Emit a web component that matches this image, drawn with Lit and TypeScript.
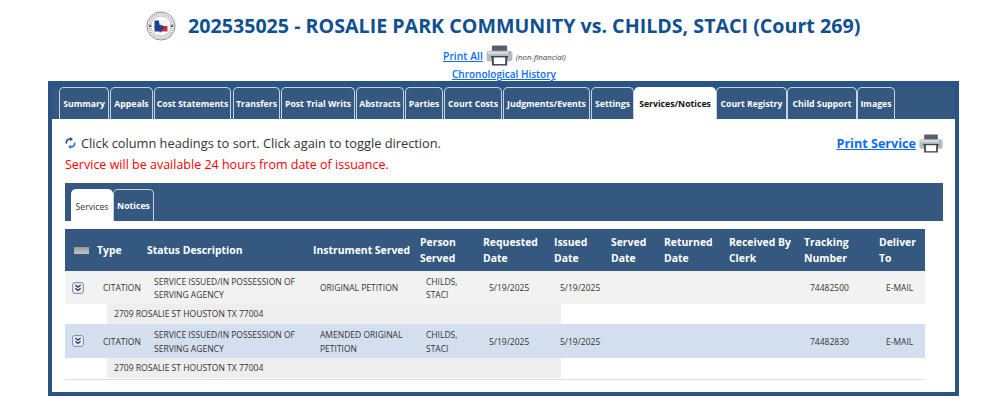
import { LitElement, html, css } from "lit";
import { customElement } from "lit/decorators.js";

const TABS: [string, number, number][] = [
  ["Summary", 50, 1], ["Appeals", 43, 1], ["Cost Statements", 77, 2], ["Transfers", 47, 1],
  ["Post Trial Writs", 74, 1], ["Abstracts", 48, 1], ["Parties", 38, 1], ["Court Costs", 58, 1],
  ["Judgments/Events", 87, 1], ["Settings", 43, 0], ["Services/Notices", 82, 0],
  ["Court Registry", 71, 0], ["Child Support", 70, 0], ["Images", 38, 0],
];

const COLS = [25, 50, 166, 107, 63, 71, 57, 53, 65, 75, 75, 53];
const HEAD: string[][] = [
  [], ["Type"], ["Status Description"], ["Instrument Served"], ["Person", "Served"],
  ["Requested", "Date"], ["Issued", "Date"], ["Served", "Date"], ["Returned", "Date"],
  ["Received By", "Clerk"], ["Tracking", "Number"], ["Deliver", "To"],
];
const ROWS = [
  { inst: ["ORIGINAL PETITION"], track: "74482500", alt: false },
  { inst: ["AMENDED ORIGINAL", "PETITION"], track: "74482830", alt: true },
];

const lines = (l: string[]) => l.map((t, i) => html`${i ? html`<br />` : ""}${t}`);

const printer = (w: number, h: number) => html`<svg class="ico" width=${w} height=${h} viewBox="0 0 28 22">
  <rect x="6" y="0.5" width="16" height="7" rx="1" fill="#5b5f66" />
  <rect x="0.5" y="6" width="27" height="11" rx="2" fill="#b4bac1" />
  <rect x="1.5" y="7" width="25" height="2.5" fill="#d9dde1" />
  <rect x="23" y="7.5" width="3" height="2" fill="#7fb4e0" />
  <rect x="5" y="11.5" width="18" height="2" fill="#4a4d52" />
  <rect x="6" y="12" width="16" height="9.5" fill="#3f4247" />
  <rect x="8" y="13" width="12" height="7" fill="#fff" />
</svg>`;

const seal = html`<svg class="seal" width="30" height="30" viewBox="0 0 30 30">
  <circle cx="15" cy="15" r="14" fill="#fff" stroke="#8a8a8a" stroke-width="1" />
  <circle cx="15" cy="15" r="11.8" fill="none" stroke="#777" stroke-width="2" stroke-dasharray="1 1.1" opacity=".7" />
  <circle cx="15" cy="15" r="10" fill="#fff" stroke="#999" stroke-width=".6" />
  <rect x="3.2" y="14.2" width="2" height="1.6" fill="#333" />
  <rect x="24.8" y="14.2" width="2" height="1.6" fill="#333" />
  <rect x="8.5" y="9.5" width="4.5" height="11" fill="#1d3f94" />
  <rect x="13" y="9.5" width="8.5" height="5.5" fill="#f4f4f4" />
  <rect x="13" y="15" width="8.5" height="5.5" fill="#d5312d" />
  <path d="M10 10 L13 10 L13.5 13.5 L17 14.5 L18.5 17 L15.5 20 L14 22 L12.5 18.5 L10.5 17.5 L8 15.5 L10 14.5 Z" fill="#1d3f94" opacity=".9" />
</svg>`;

const sortIcon = html`<svg class="ico" width="11" height="12" viewBox="0 0 11 12">
  <path d="M1.4 6.6 C0.8 3.6 2.8 1.8 5.6 2.1" fill="none" stroke="#1f4e8a" stroke-width="1.6" />
  <path d="M5 0 L8 2.2 L5 4.3 Z" fill="#1f4e8a" />
  <path d="M9.6 5.4 C10.2 8.4 8.2 10.2 5.4 9.9" fill="none" stroke="#3c78b8" stroke-width="1.6" />
  <path d="M6 12 L3 9.8 L6 7.7 Z" fill="#3c78b8" />
</svg>`;

const expandIcon = html`<svg class="ico" width="12" height="12" viewBox="0 0 12 12">
  <rect x=".6" y=".6" width="10.8" height="10.8" rx="2" fill="#e4ecf6" stroke="#7b8ba0" stroke-width="1" />
  <path d="M3.4 3 L6 5.2 L8.6 3 M3.4 6.2 L6 8.4 L8.6 6.2" fill="none" stroke="#2b3a4e" stroke-width="1.2" />
</svg>`;

@customElement("app-root")
export class AppRoot extends LitElement {
  static styles = css`
    :host { display: block; width: 999px; height: 418px; overflow: hidden; background: #fff; font-family: "Open Sans", "Noto Sans", sans-serif; color: #333; }
    a { color: #0a6cf5; text-decoration: underline; font-weight: 600; }
    .ico { display: block; flex: none; }
    .title { display: flex; align-items: center; height: 30px; margin: 11px 0 0 146px; }
    .seal { margin-right: 12px; flex: none; }
    h1 { margin: 0; font-size: 19.65px; font-weight: 700; color: #0f5091; white-space: nowrap; line-height: 26px; }
    .print-all { display: flex; align-items: center; height: 22px; margin: 3px 0 0 443px; font-size: 10.4px; }
    .print-all a { padding-top: 2px; }
    .print-all .ico { margin: 0 3px 0 3px; }
    .print-all i { font-size: 7.8px; color: #444; padding-top: 3px; }
    .chrono { height: 14px; line-height: 14px; margin: 1px 0 0 452px; font-size: 10px; }
    .box { width: 903px; height: 305px; margin: 0 0 0 48px; border: 4px solid #2a5486; border-top-width: 6px; background: #34587f; display: flex; flex-direction: column; }
    .tabs { display: flex; height: 32px; padding-left: 7px; flex: none; }
    .tab { box-sizing: border-box; flex: none; height: 32px; border: 1px solid #c5d2e0; border-bottom: 0; border-radius: 5px 5px 0 0; color: #fff; font-size: 8.7px; font-weight: 700; display: flex; align-items: center; justify-content: center; white-space: nowrap; padding-top: 1px; }
    .tab.on { background: #fff; color: #111; border-color: #fff; }
    .panel { flex: 1; background: #fff; padding: 13px 12px 0 13px; }
    .top { display: flex; justify-content: space-between; height: 22px; align-items: center; }
    .hint { display: flex; align-items: center; gap: 5px; font-size: 12.8px; color: #333; }
    .ps { display: flex; align-items: center; gap: 3px; font-size: 12.6px; font-weight: 700; }
    .red { color: #f00; font-size: 12.5px; height: 20px; line-height: 22px; }
    .subbar { height: 38px; margin-top: 9px; background: #34587f; display: flex; align-items: flex-end; padding-left: 6px; box-sizing: border-box; width: 878px; }
    .stab { box-sizing: border-box; height: 32px; font-size: 8.7px; display: flex; align-items: center; justify-content: center; border-radius: 5px 5px 0 0; }
    .stab.on { width: 42px; background: #fff; color: #333; font-weight: 400; padding-top: 3px; }
    .stab.off { width: 41px; color: #fff; font-weight: 700; border: 1px solid #c5d2e0; border-bottom: 0; padding-top: 1px; }
    table { border-collapse: collapse; table-layout: fixed; width: 860px; margin-top: 8px; }
    th { background: #34587f; color: #fff; font-size: 10.4px; font-weight: 700; text-align: left; padding: 0 0 0 7px; height: 42px; line-height: 16.5px; vertical-align: middle; }
    td { box-sizing: border-box; font-size: 8.5px; color: #333; padding: 1px 0 0 14px; line-height: 13.2px; height: 33px; vertical-align: middle; }
    td.n { padding-left: 13px; }
    tr.a td { background: #f2f2f2; }
    tr.b td { background: #d3dfef; height: 34px; }
    td.exp { padding: 0 0 0 7px; }
    th.ic { padding-left: 9px; }
    .cardicon { width: 15px; height: 7px; background: linear-gradient(#9a9a9a, #c4c4c4); }
    tr.addr td { padding: 0; height: 20px; }
    tr.addr.last td { border-bottom: 1px solid #dcdcdc; height: 21px; }
    .addrbox { box-sizing: border-box; width: 454px; margin-left: 42px; height: 20px; line-height: 21px; background: #eee; padding-left: 7px; font-size: 8.55px; }
  `;

  render() {
    return html`
      <div class="title">${seal}<h1>202535025 - ROSALIE PARK COMMUNITY vs. CHILDS, STACI (Court 269)</h1></div>
      <div class="print-all"><a href="#">Print All</a>${printer(27, 21)}<i>(non-financial)</i></div>
      <div class="chrono"><a href="#">Chronological History</a></div>
      <div class="box">
        <div class="tabs">
          ${TABS.map(([t, w, g]) => html`<div class="tab ${t === "Services/Notices" ? "on" : ""}" style="width:${w}px;margin-right:${g}px">${t}</div>`)}
        </div>
        <div class="panel">
          <div class="top">
            <div class="hint">${sortIcon}<span>Click column headings to sort. Click again to toggle direction.</span></div>
            <a class="ps" href="#"><span>Print Service</span>${printer(24, 19)}</a>
          </div>
          <div class="red">Service will be available 24 hours from date of issuance.</div>
          <div class="subbar"><div class="stab on">Services</div><div class="stab off">Notices</div></div>
          <table>
            <colgroup>${COLS.map((w) => html`<col style="width:${w}px" />`)}</colgroup>
            <thead><tr>
              ${HEAD.map((h, i) => i === 0 ? html`<th class="ic"><div class="cardicon"></div></th>` : html`<th>${lines(h)}</th>`)}
            </tr></thead>
            <tbody>
              ${ROWS.map((r, i) => html`
                <tr class=${r.alt ? "b" : "a"}>
                  <td class="exp">${expandIcon}</td>
                  <td class="n">CITATION</td>
                  <td>SERVICE ISSUED/IN POSSESSION OF<br />SERVING AGENCY</td>
                  <td>${lines(r.inst)}</td>
                  <td class="n">CHILDS,<br />STACI</td>
                  <td class="n">5/19/2025</td>
                  <td class="n">5/19/2025</td>
                  <td></td><td></td><td></td>
                  <td class="n">${r.track}</td>
                  <td>E-MAIL</td>
                </tr>
                <tr class="addr ${i === ROWS.length - 1 ? "last" : ""}"><td colspan="12"><div class="addrbox">2709 ROSALIE ST HOUSTON TX 77004</div></td></tr>
              `)}
            </tbody>
          </table>
        </div>
      </div>
    `;
  }
}
